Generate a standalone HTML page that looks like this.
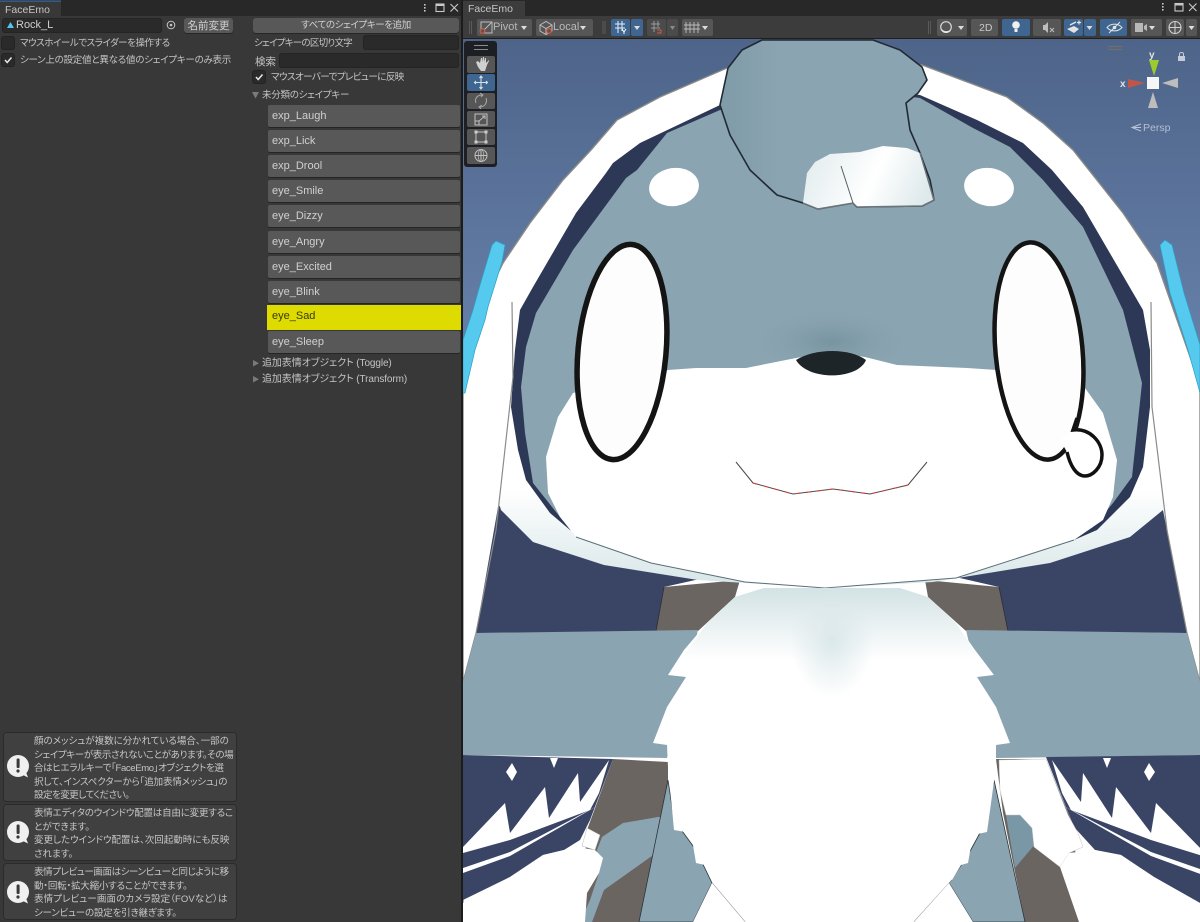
<!DOCTYPE html>
<html lang="ja">
<head>
<meta charset="utf-8">
<title>FaceEmo</title>
<style>
html,body{margin:0;padding:0;width:1200px;height:922px;overflow:hidden;background:#383838}
body{position:relative;font-family:"Liberation Sans","Noto Sans CJK JP",sans-serif;color:#c8c8c8;font-size:9.5px}
.a{position:absolute;white-space:nowrap}
.t{position:absolute;white-space:nowrap;font-feature-settings:"palt";line-height:14px;height:14px;color:#c4c4c4;font-size:9.5px}
.l{position:absolute;white-space:nowrap;line-height:14px;height:14px;color:#c4c4c4;font-size:10.5px}
.btn{position:absolute;background:#585858;border-radius:3px;box-shadow:0 1px 0 #262626;color:#d0d0d0;text-align:center;font-feature-settings:"palt";line-height:16px;white-space:nowrap}
.fld{position:absolute;background:#2a2a2a;border-radius:3px;box-shadow:inset 0 0 0 1px #242424}
.cb{position:absolute;width:12px;height:12px;background:#2a2a2a;border-radius:2px;box-shadow:0 0 0 1px #232323}
.key{position:absolute;left:268px;width:192px;height:22px;background:#585858;border-radius:2px;box-shadow:0 1px 0 #252525;color:#d0d0d0;font-size:11px;line-height:23px;padding-left:4px;box-sizing:border-box}
.help{position:absolute;left:3px;width:233px;border-radius:3px;box-sizing:border-box}
.help div{position:absolute;left:31px;top:3px;font-feature-settings:"palt";line-height:13.5px;white-space:nowrap;color:#c6c6c6;font-size:9.5px}
.help span{display:block}
</style>
</head>
<body>
<svg class="a" style="left:0;top:0" width="1200" height="922" viewBox="0 0 1200 922" xmlns="http://www.w3.org/2000/svg">
<defs>
<linearGradient id="sky" x1="0" y1="39" x2="0" y2="400" gradientUnits="userSpaceOnUse"><stop offset="0" stop-color="#4e6489"/><stop offset=".6" stop-color="#5f78a0"/><stop offset="1" stop-color="#6a84ad"/></linearGradient>
<radialGradient id="nos"><stop offset="0" stop-color="#7794a1"/><stop offset="1" stop-color="#8ba4b1" stop-opacity="0"/></radialGradient>
<radialGradient id="chestV"><stop offset="0" stop-color="#dbe8ea"/><stop offset="1" stop-color="#dbe8ea" stop-opacity="0"/></radialGradient>
<linearGradient id="chestG" x1="0" y1="590" x2="0" y2="660" gradientUnits="userSpaceOnUse"><stop offset="0" stop-color="#d4e3e5"/><stop offset="1" stop-color="#fff"/></linearGradient>
<linearGradient id="collarG" x1="0" y1="490" x2="0" y2="590" gradientUnits="userSpaceOnUse"><stop offset="0" stop-color="#fff"/><stop offset="1" stop-color="#d6e5e7"/></linearGradient>
<linearGradient id="tuftG" x1="720" y1="0" x2="780" y2="0" gradientUnits="userSpaceOnUse"><stop offset="0" stop-color="#7f9ba8"/><stop offset="1" stop-color="#8ba4b1"/></linearGradient>
<linearGradient id="patchG" x1="810" y1="150" x2="925" y2="205" gradientUnits="userSpaceOnUse"><stop offset="0" stop-color="#e2ecee"/><stop offset=".55" stop-color="#fff"/><stop offset="1" stop-color="#dce8ea"/></linearGradient>
</defs>

<rect x="463" y="39" width="737" height="883" fill="url(#sky)"/>

<!-- hood outer -->
<path d="M463 370L483 303L503 263L530 223L563 180L591 150L617 120L660 97L727 68L800 55L922 65L1007 97L1043 123L1073 150L1123 213L1157 263L1200 385V922H463Z" fill="#fff" stroke="#8a8a86" stroke-width="1.4"/>

<!-- blue ornaments -->
<path d="M496 241L505 245L502 262L488 307L485 320L475 350L465 393H463V340L473 310L480 285L492 245Z" fill="#55c9ee" stroke="#2f9fc6" stroke-width=".7"/>
<path d="M1165 240L1172 245L1184 293L1200 345V393L1195 375L1188 350L1170 293L1160 245Z" fill="#55c9ee" stroke="#2f9fc6" stroke-width=".7"/>

<!-- lower body navy + brown -->
<path d="M498 507L476 633L656 632L664 587L740 570H925L999 587L1008 632L1187 633L1163 510L1100 480H540Z" fill="#3a4566"/>
<path d="M664 587L656 631H698L735 597L740 580ZM928 597L966 631H1008L999 587L925 580Z" fill="#6b6561"/>
<path d="M664 587L656 631M999 587L1008 631" stroke="#2c2f33" stroke-width=".8" fill="none"/>

<!-- collar -->
<path d="M498 500L501 510L533 542L604 565L698 580L825 588L933 582L1050 563L1130 537L1163 510L1160 400H515Z" fill="url(#collarG)"/>

<!-- hood navy band -->
<path d="M720 105L640 143L613 163L606 173L576 213L533 287L520 310L515 350L511 407L518 450L526 480L550 513L570 530L651 563L745 582L825 588L956 578L1074 540L1097 530L1130 497L1143 467L1150 407L1150 350L1143 310L1083 207L1052 170L1023 143L977 120L920 95L825 80Z" fill="#2d3856"/>

<!-- hair lines -->
<path d="M512 302L513 377L496 530L476 633L463 682" stroke="#8b8b88" stroke-width="1.2" fill="none"/>
<path d="M1151 302L1152 407L1167 530L1187 633L1200 682" stroke="#8b8b88" stroke-width="1.2" fill="none"/>

<!-- grey face -->
<path d="M720 110L667 133L637 170L626 178L573 250L536 313L526 347L521 387L525 433L533 483L560 517L570 528L651 560L825 586L1060 545L1093 527L1113 503L1132 477L1142 383L1123 310L1083 227L1043 180L1010 147L973 128L920 98L825 85Z" fill="#8ba4b1"/>
<ellipse cx="831" cy="342" rx="85" ry="36" fill="url(#nos)"/>

<!-- muzzle white -->
<path d="M668 370L696 368L746 368L796 358L831 352L865 357L897 365L967 368L997 370L1085 388L1103 413L1117 460L1113 497L1103 520L1074 540L956 578L825 588L745 582L651 563L576 537L560 517L548 493L546 457L558 417L573 393Z" fill="#fff"/>
<path d="M576 537L651 563L745 582L825 588L956 578L1074 540" stroke="#5a7079" stroke-width="1" fill="none"/>

<!-- grey band -->
<path d="M463 682L476 633L698 630L667 758L463 755Z" fill="#8ba4b1"/>
<path d="M1200 682L1187 633L966 630L996 758L1200 755Z" fill="#8ba4b1"/>

<!-- lower-left -->
<path d="M613 759L668 762L668 922H580L587 830Z" fill="#6b6561"/>
<path d="M463 755L613 759L590 820L580 840L564 850L543 855L510 877L463 900Z" fill="#3a4566"/>
<path d="M463 847L505 803L510 833L545 787L549 818L578 773L580 802L609 760L599 793L590 810L510 840L463 853Z" fill="#fff"/>
<path d="M463 868L510 852L597 806L510 856L463 873Z" fill="#fff"/>
<path d="M512 763L517 772L512 781L506 772ZM550 758H558L554 768Z" fill="#fff"/>
<path d="M658 817L623 823L602 837L597 850L599 873L590 900L580 922H592L604 890L649 858L668 845V817Z" fill="#8ba4b1"/>
<path d="M668 780L639 922H693L712 883L696 850L674 820Z" fill="#8ba4b1" stroke="#2b3338" stroke-width=".8"/>
<path d="M463 922V903L510 877L543 855L564 850L583 848L595 850L603 858L599 873L587 893L585 922Z" fill="#fff"/>
<path d="M587 828L600 835L595 850L582 846Z" fill="#fff" stroke="#bbb" stroke-width=".5"/>

<!-- lower-right -->
<path d="M996 759L1046 759L1074 827L1079 922H1025L1003 813Z" fill="#6b6561"/>
<path d="M1046 757L1200 755V903L1154 877L1121 855L1095 850L1074 827Z" fill="#3a4566"/>
<g transform="translate(1661 0) scale(-1 1)">
<path d="M458 851L505 803L510 833L545 787L549 818L578 773L580 802L609 760L599 793L590 810L510 840L458 856Z" fill="#fff"/>
<path d="M458 870L510 852L597 806L510 856L458 875Z" fill="#fff"/>
<path d="M512 763L517 772L512 781L506 772ZM550 758H558L554 768Z" fill="#fff"/>
</g>
<path d="M1006 815L1020 815L1032 828L1036 843L1015 868Z" fill="#7a97a5"/>
<path d="M994 780L1025 922H973L949 883L968 855L987 820Z" fill="#8ba4b1" stroke="#2b3338" stroke-width=".8"/>
<path d="M999 760L1046 759L1068 815L1078 833L1083 847L1069 853L1060 867L1034 847L1032 828L1020 815L1006 815L1000 790Z" fill="#fff" stroke="#c4c4c4" stroke-width=".5"/>
<path d="M1200 922V903L1154 877L1121 855L1095 850L1069 853L1060 867L1079 922Z" fill="#fff"/>

<!-- chest -->
<path d="M764 588L735 597L707 623L684 650L668 675L686 677L667 707L653 743L667 745L668 767L674 830L691 833L696 863L705 865L745 922H914L952 880L961 865L968 863L973 835L987 832L996 767L996 745L1010 743L996 707L977 677L994 675L975 650L956 623L928 597L900 588Z" fill="#fff"/>
<path d="M764 588L735 597L707 623L681 660H980L956 623L928 597L900 588Z" fill="url(#chestG)"/>
<ellipse cx="832" cy="640" rx="42" ry="58" fill="url(#chestV)"/>
<path d="M712 883L745 922M952 880L914 922" stroke="#8b8b88" stroke-width="1" fill="none"/>
<path d="M712 883L693 922H745Z M949 883L973 922H914Z" fill="#fff"/>

<!-- tuft -->
<path d="M762 40L742 50L728 68L720 105L730 135L750 170L777 195L803 203L818 209L853 203L857 207L922 206L934 200L930 180L920 153L910 130L906 103L918 93L927 80L922 67L900 50L873 40Z" fill="url(#tuftG)" stroke="#1f2a35" stroke-width="1.6" stroke-linejoin="round"/>
<path d="M803 203L807 173L815 162L830 154L860 152L883 146L907 148L920 153L933 200L922 206L857 207L853 203L818 209Z" fill="url(#patchG)"/>
<path d="M803 203L818 209L853 203L857 207L922 206L934 200L920 153" stroke="#6a7479" stroke-width="1.4" fill="none"/>
<path d="M841 166L853 203" stroke="#555f64" stroke-width="1" fill="none"/>

<!-- head dots -->
<ellipse cx="674" cy="187" rx="25" ry="19" fill="#fff" transform="rotate(-8 674 187)"/>
<ellipse cx="989" cy="187" rx="25" ry="19" fill="#fff" transform="rotate(8 989 187)"/>

<!-- eyes -->
<ellipse cx="622" cy="352" rx="44" ry="108" fill="#fdfdfd" stroke="#141414" stroke-width="5.500" transform="rotate(5.300 622 352)"/>
<ellipse cx="1039" cy="351" rx="43.500" ry="109" fill="#fdfdfd" stroke="#141414" stroke-width="4.500" transform="rotate(-5.300 1039 351)"/>
<path d="M1073 430C1090 428 1102 442 1102 455C1102 468 1092 476 1085 476C1076 476 1070 465 1067 452L1060 440Z" fill="#fff"/>
<path d="M1077 418L1073 430C1090 428 1102 442 1102 455C1102 468 1092 476 1085 476C1076 476 1070 465 1067 452" fill="none" stroke="#111" stroke-width="3.500"/>

<!-- nose -->
<path d="M796 360C815 348 850 348 866 360C858 380 808 381 796 360Z" fill="#1e2528"/>

<!-- mouth -->
<path d="M736 462L753 483L793 494L833 489L870 494L908 485L927 462" stroke="#4a4a4a" stroke-width="1" fill="none"/>
<path d="M753 483L793 494L833 489L870 494L908 485" stroke="#d43a34" stroke-width="1" stroke-dasharray="5 6" fill="none"/>

<!-- tool panel -->
<rect x="464" y="41" width="33" height="126" rx="3" fill="#1c2024"/>
<path d="M474 45.500H488M474 49.500H488" stroke="#8a8a8a" stroke-width="1"/>
<rect x="467" y="56" width="28" height="17" rx="2" fill="#565656"/>
<rect x="467" y="74" width="28" height="17" rx="2" fill="#3f6690"/>
<rect x="467" y="93" width="28" height="16" rx="2" fill="#565656"/>
<rect x="467" y="111" width="28" height="16" rx="2" fill="#565656"/>
<rect x="467" y="129" width="28" height="16" rx="2" fill="#565656"/>
<rect x="467" y="147" width="28" height="17" rx="2" fill="#565656"/>
<path d="M476 62L478 67L481 71H485L487 65L489 61V60L486 63V58L485 58L484 62V57H483L482 62V58H481L480 63L478 61Z" fill="#d0d0d0"/>
<path d="M481 76V89M474.500 82.500H487.500M479.500 78L481 76L482.500 78M479.500 87L481 89L482.500 87M476 81L474.500 82.500L476 84M486 81L487.500 82.500L486 84" stroke="#d6dfe8" stroke-width="1.100" fill="none"/>
<path d="M476 103C474 98 478 95 482 95M486 98C488 103 484 107 480 107M480 93L483 95L481 97M482 105L479 107L481 109" stroke="#a9a9a9" stroke-width="1" fill="none"/>
<rect x="475" y="114" width="12" height="11" fill="none" stroke="#c0c0c0" stroke-width="1"/>
<rect x="475" y="121" width="4" height="4" fill="#565656" stroke="#c0c0c0" stroke-width="1"/>
<path d="M479 121L485 116M482 116H485V119" stroke="#c0c0c0" stroke-width="1" fill="none"/>
<rect x="476" y="132" width="10" height="10" fill="none" stroke="#c0c0c0" stroke-width="1"/>
<path d="M474.500 130.500h3v3h-3zM484.500 130.500h3v3h-3zM474.500 140.500h3v3h-3zM484.500 140.500h3v3h-3z" fill="#ccc"/>
<circle cx="481" cy="155.500" r="6" fill="none" stroke="#c0c0c0" stroke-width="1"/>
<path d="M475 155.500H487M481 149.500V161.500" stroke="#c0c0c0" stroke-width="1"/>
<ellipse cx="481" cy="155.500" rx="2.800" ry="6" fill="none" stroke="#c0c0c0" stroke-width=".7"/>

<!-- gizmo -->
<path d="M1108 46.500H1122M1108 49.500H1122" stroke="#6f6f6f" stroke-width="1.200"/>
<path d="M1128 79L1145 83L1128 88Z" fill="#c2554a"/>
<path d="M1149 60H1159L1154 76Z" fill="#9bcb2e"/>
<path d="M1178 78V88L1162 83Z" fill="#bdbdbd"/>
<path d="M1148 108H1158L1153 92Z" fill="#bdbdbd"/>
<rect x="1147" y="77" width="12" height="12" fill="#f4f6f8"/>
<text x="1149" y="58" font-family="Liberation Sans, sans-serif" font-size="10" font-weight="bold" fill="#dfe3e8">y</text>
<text x="1120" y="87" font-family="Liberation Sans, sans-serif" font-size="10" font-weight="bold" fill="#dfe3e8">x</text>
<rect x="1178" y="56" width="7" height="5" fill="#c5ccd6"/>
<path d="M1179.500 56V54C1179.500 52 1183.500 52 1183.500 54V56" stroke="#c5ccd6" fill="none"/>
<path d="M1141 124L1132 127.500L1141 131M1134 127.500H1141" stroke="#bac5d6" fill="none"/>
<text x="1143" y="131" font-family="Liberation Sans, sans-serif" font-size="10.500" fill="#b3bfd2">Persp</text>

<!-- top bars -->
<rect x="0" y="0" width="1200" height="16" fill="#282828"/>
<rect x="0" y="16" width="461" height="1" fill="#383838"/>
<rect x="463" y="16" width="737" height="22" fill="#3c3c3c"/>
<rect x="463" y="38" width="737" height="1" fill="#1f1f1f"/>
<rect x="461" y="0" width="2" height="922" fill="#1c1c1c"/>
<rect x="0" y="1" width="61" height="16" fill="#383838"/>
<rect x="0" y="0.500" width="61" height="1.200" fill="#3a6a9e"/>
<rect x="463" y="1" width="62" height="16" fill="#3c3c3c"/>
<g fill="none" stroke="#c8c8c8" stroke-width="1.100">
<rect x="436" y="4" width="8" height="7.500"/><path d="M436 5H444" stroke-width="2"/>
<path d="M450.500 4L458 11.500M458 4L450.500 11.500"/>
<rect x="1175" y="3.500" width="8" height="7.500"/><path d="M1175 4.500H1183" stroke-width="2"/>
<path d="M1189 3.500L1196.500 11M1196.500 3.500L1189 11"/>
</g>
<g fill="#c8c8c8"><rect x="424" y="4" width="1.600" height="1.600"/><rect x="424" y="7" width="1.600" height="1.600"/><rect x="424" y="10" width="1.600" height="1.600"/>
<rect x="1162" y="3" width="1.600" height="1.600"/><rect x="1162" y="6" width="1.600" height="1.600"/><rect x="1162" y="9" width="1.600" height="1.600"/></g>

<!-- scene toolbar -->
<path d="M469.500 21V34M471.500 21V34M603 21V34M605 21V34M928.500 21V34M930.500 21V34" stroke="#5a5a5a" stroke-width="1"/>
<g fill="#565656">
<rect x="477" y="19" width="55" height="17" rx="2"/>
<rect x="536" y="19" width="57" height="17" rx="2"/>
<rect x="647" y="19" width="19" height="17" rx="2" fill="#4b4b4b"/>
<rect x="667" y="19" width="11" height="17" rx="2" fill="#4b4b4b"/>
<rect x="682" y="19" width="31" height="17" rx="2"/>
<rect x="937" y="19" width="30" height="17" rx="2"/>
<rect x="971" y="19" width="27" height="17" rx="2"/>
<rect x="1033" y="19" width="28" height="17" rx="2"/>
<rect x="1131" y="19" width="31" height="17" rx="2"/>
<rect x="1166" y="19" width="18" height="17" rx="2"/>
<rect x="1186" y="19" width="11" height="17" rx="2"/>
</g>
<g fill="#3f6690">
<rect x="611" y="19" width="19" height="17" rx="2"/>
<rect x="631" y="19" width="12" height="17" rx="2"/>
<rect x="1002" y="19" width="28" height="17" rx="2"/>
<rect x="1064" y="19" width="19" height="17" rx="2"/>
<rect x="1084" y="19" width="12" height="17" rx="2"/>
<rect x="1100" y="19" width="27" height="17" rx="2"/>
</g>
<g fill="#dcdcdc">
<path d="M521 26H527L524 30Z M580 26H586L583 30Z M634 26H640L637 30Z"/>
<path d="M670 26H675L672.500 30Z" fill="#8a8a8a"/>
<path d="M702 26H708L705 30Z M958 26H964L961 30Z M1086.500 26H1092.500L1089.500 30Z M1149 26H1155L1152 30Z M1188.500 26H1194.500L1191.500 30Z"/>
</g>
<rect x="481" y="22" width="11" height="11" fill="none" stroke="#bcbcbc"/><path d="M482 32L492 22" stroke="#bcbcbc"/><circle cx="482.500" cy="31" r="2.300" fill="#565656" stroke="#e0563c" stroke-width="1.200"/>
<path d="M540 25L546 21.500L552 25V31L546 34.500L540 31ZM540 25L546 28.500L552 25M546 28.500V34.500" fill="none" stroke="#bcbcbc"/><circle cx="549" cy="31" r="2.300" fill="#565656" stroke="#e0563c" stroke-width="1.200"/>
<path d="M615 24H625M615 28H625M618 21V33M622 21V31" stroke="#e6eef5" stroke-width="1" fill="none"/><path d="M622 29L624 32L626 29M624 32V34" stroke="#fff" fill="none"/>
<path d="M651 24H660M651 28H660M654 21V32M658 21V27" stroke="#9a9a9a" fill="none"/><path d="M657 30H661V33H657" stroke="#d65a3e" fill="none"/>
<path d="M686 22V33M690 22V33M694 22V33M698 22V33M684 25H700M684 29H700" stroke="#bcbcbc" fill="none" stroke-width=".9"/>
<circle cx="946" cy="27" r="5.300" fill="none" stroke="#d8d8d8" stroke-width="1.200"/><path d="M941 28C943 32 949 32 951 29C951 32 948 33 946 33C943 33 941 31 941 28Z" fill="#e8e8e8"/>
<text x="979" y="31" font-family="Liberation Sans, sans-serif" font-size="10.500" fill="#c8c8c8">2D</text>
<circle cx="1016" cy="25" r="3.800" fill="#f0f0f0"/><rect x="1014.500" y="29" width="3" height="3" fill="#f0f0f0"/>
<path d="M1043 25H1045L1048 22V33L1045 30H1043Z" fill="#bdbdbd"/><path d="M1050 28L1054 32M1054 28L1050 32" stroke="#bdbdbd"/>
<path d="M1067 29L1074 26L1079 29L1074 33Z" fill="#e4e4e4"/><path d="M1070 25L1076 22" stroke="#e4e4e4" stroke-width="1.500"/><path d="M1077 22.500H1081M1079 20.500V24.500" stroke="#e4e4e4" stroke-width="1.200"/>
<path d="M1107 27.500C1111 23 1118 23 1122 27.500C1118 32 1111 32 1107 27.500Z" fill="none" stroke="#e4e4e4"/><path d="M1109 33L1120 22" stroke="#e4e4e4"/><circle cx="1114.500" cy="27.500" r="1.800" fill="#e4e4e4"/>
<rect x="1135" y="23" width="8" height="9" fill="#b8b8b8"/><path d="M1144 26L1147 24V31L1144 29Z" fill="#b8b8b8"/>
<circle cx="1175" cy="27.500" r="6" fill="none" stroke="#d4d4d4" stroke-width="1.100"/><path d="M1169 27.500H1181M1175 21.500V33.500" stroke="#d4d4d4"/>

<!-- foldouts -->
<path d="M252 92H259L255.500 98.500Z" fill="#7a7a7a"/>
<path d="M253 360V366.500L259 363.200Z M253 376V382.500L259 379.200Z" fill="#7a7a7a"/>

<!-- help boxes -->
<g fill="#404040" stroke="#2b2b2b">
<rect x="3.500" y="732.500" width="233" height="69" rx="3"/>
<rect x="3.500" y="804.500" width="233" height="56" rx="3"/>
<rect x="3.500" y="863.500" width="233" height="56" rx="3"/>
</g>
<g>
<circle cx="18" cy="766" r="11" fill="#f0f0f0"/><path d="M20 773.500L28 777.500L25 769.500Z" fill="#f0f0f0"/><rect x="16.600" y="758.500" width="3" height="9.500" rx="1" fill="#3a3a3a"/><circle cx="18" cy="771" r="1.600" fill="#3a3a3a"/>
</g>
<g transform="translate(0 66)">
<circle cx="18" cy="766" r="11" fill="#f0f0f0"/><path d="M20 773.500L28 777.500L25 769.500Z" fill="#f0f0f0"/><rect x="16.600" y="758.500" width="3" height="9.500" rx="1" fill="#3a3a3a"/><circle cx="18" cy="771" r="1.600" fill="#3a3a3a"/>
</g>
<g transform="translate(0 126)">
<circle cx="18" cy="766" r="11" fill="#f0f0f0"/><path d="M20 773.500L28 777.500L25 769.500Z" fill="#f0f0f0"/><rect x="16.600" y="758.500" width="3" height="9.500" rx="1" fill="#3a3a3a"/><circle cx="18" cy="771" r="1.600" fill="#3a3a3a"/>
</g>
</svg>

<div class="l" style="left:5px;top:3px">FaceEmo</div>
<div class="l" style="left:468px;top:2px">FaceEmo</div>
<div class="l" style="left:493px;top:20px;font-size:11px;color:#b8b8b8">Pivot</div>
<div class="l" style="left:553px;top:20px;font-size:11px;color:#b8b8b8">Local</div>

<!-- left column -->
<div class="fld" style="left:2px;top:18px;width:160px;height:15px"></div>
<svg class="a" style="left:6px;top:21px" width="9" height="8"><path d="M1 7L4.500 1L8 7Z" fill="#55c4ee"/></svg>
<div class="l" style="left:16px;top:18px;font-size:11px;color:#cfcfcf">Rock_L</div>
<svg class="a" style="left:165px;top:19px" width="12" height="12"><circle cx="6" cy="6" r="3.800" fill="none" stroke="#c4c4c4"/><circle cx="6" cy="6" r="1.300" fill="#c4c4c4"/></svg>
<div class="btn" style="left:184px;top:18px;width:49px;height:15px;font-size:10.500px">名前変更</div>
<div class="cb" style="left:2px;top:37px"></div>
<div class="t" style="left:20px;top:37px;letter-spacing:-.45px">マウスホイールでスライダーを操作する</div>
<div class="cb" style="left:2px;top:54px"></div>
<svg class="a" style="left:2px;top:54px" width="12" height="12"><path d="M3 6L5.200 8.500L9.500 3.500" fill="none" stroke="#e8e8e8" stroke-width="1.500"/></svg>
<div class="t" style="left:20px;top:54px;letter-spacing:-.25px">シーン上の設定値と異なる値のシェイプキーのみ表示</div>

<!-- right column -->
<div class="btn" style="left:253px;top:18px;width:206px;height:15px;font-size:9.500px;letter-spacing:-.4px">すべてのシェイプキーを追加</div>
<div class="t" style="left:254px;top:37px;letter-spacing:-.75px">シェイプキーの区切り文字</div>
<div class="fld" style="left:363px;top:35px;width:96px;height:15px"></div>
<div class="t" style="left:255px;top:55px;font-size:10.500px">検索</div>
<div class="fld" style="left:279px;top:53px;width:180px;height:15px"></div>
<div class="cb" style="left:253px;top:71px"></div>
<svg class="a" style="left:253px;top:71px" width="12" height="12"><path d="M3 6L5.200 8.500L9.500 3.500" fill="none" stroke="#e8e8e8" stroke-width="1.500"/></svg>
<div class="t" style="left:271px;top:71px;letter-spacing:-.55px">マウスオーバーでプレビューに反映</div>
<div class="t" style="left:262px;top:89px;letter-spacing:-.25px">未分類のシェイプキー</div>

<div class="key" style="top:105px">exp_Laugh</div>
<div class="key" style="top:130px">exp_Lick</div>
<div class="key" style="top:155px">exp_Drool</div>
<div class="key" style="top:180px">eye_Smile</div>
<div class="key" style="top:205px">eye_Dizzy</div>
<div class="key" style="top:231px">eye_Angry</div>
<div class="key" style="top:256px">eye_Excited</div>
<div class="key" style="top:281px">eye_Blink</div>
<div class="key" style="top:305px;left:267px;width:194px;height:25px;background:#dddb00;color:#3a3a10;padding-left:5px;border-radius:0;box-shadow:none">eye_Sad</div>
<div class="key" style="top:331px">eye_Sleep</div>

<div class="t" style="left:262px;top:357px;font-size:10px;letter-spacing:-.1px">追加表情オブジェクト (Toggle)</div>
<div class="t" style="left:262px;top:373px;font-size:10px;letter-spacing:-.1px">追加表情オブジェクト (Transform)</div>

<!-- help text -->
<div class="help" style="top:732px;height:70px"><div><span>顔のメッシュが複数に分かれている場合、一部の</span><span style="letter-spacing:-.36px">シェイプキーが表示されないことがあります。その場</span><span style="letter-spacing:-.35px">合はヒエラルキーで「FaceEmo」オブジェクトを選</span><span style="letter-spacing:-.15px">択して、インスペクターから「追加表情メッシュ」の</span><span style="letter-spacing:-.5px">設定を変更してください。</span></div></div>
<div class="help" style="top:804px;height:57px"><div><span style="letter-spacing:-.2px">表情エディタのウインドウ配置は自由に変更するこ</span><span>とができます。</span><span>変更したウインドウ配置は、次回起動時にも反映</span><span>されます。</span></div></div>
<div class="help" style="top:863px;height:57px"><div><span style="letter-spacing:-.4px">表情プレビュー画面はシーンビューと同じように移</span><span style="letter-spacing:-.2px">動・回転・拡大縮小することができます。</span><span style="letter-spacing:.1px">表情プレビュー画面のカメラ設定（FOVなど）は</span><span style="letter-spacing:-.2px">シーンビューの設定を引き継ぎます。</span></div></div>
</body>
</html>
